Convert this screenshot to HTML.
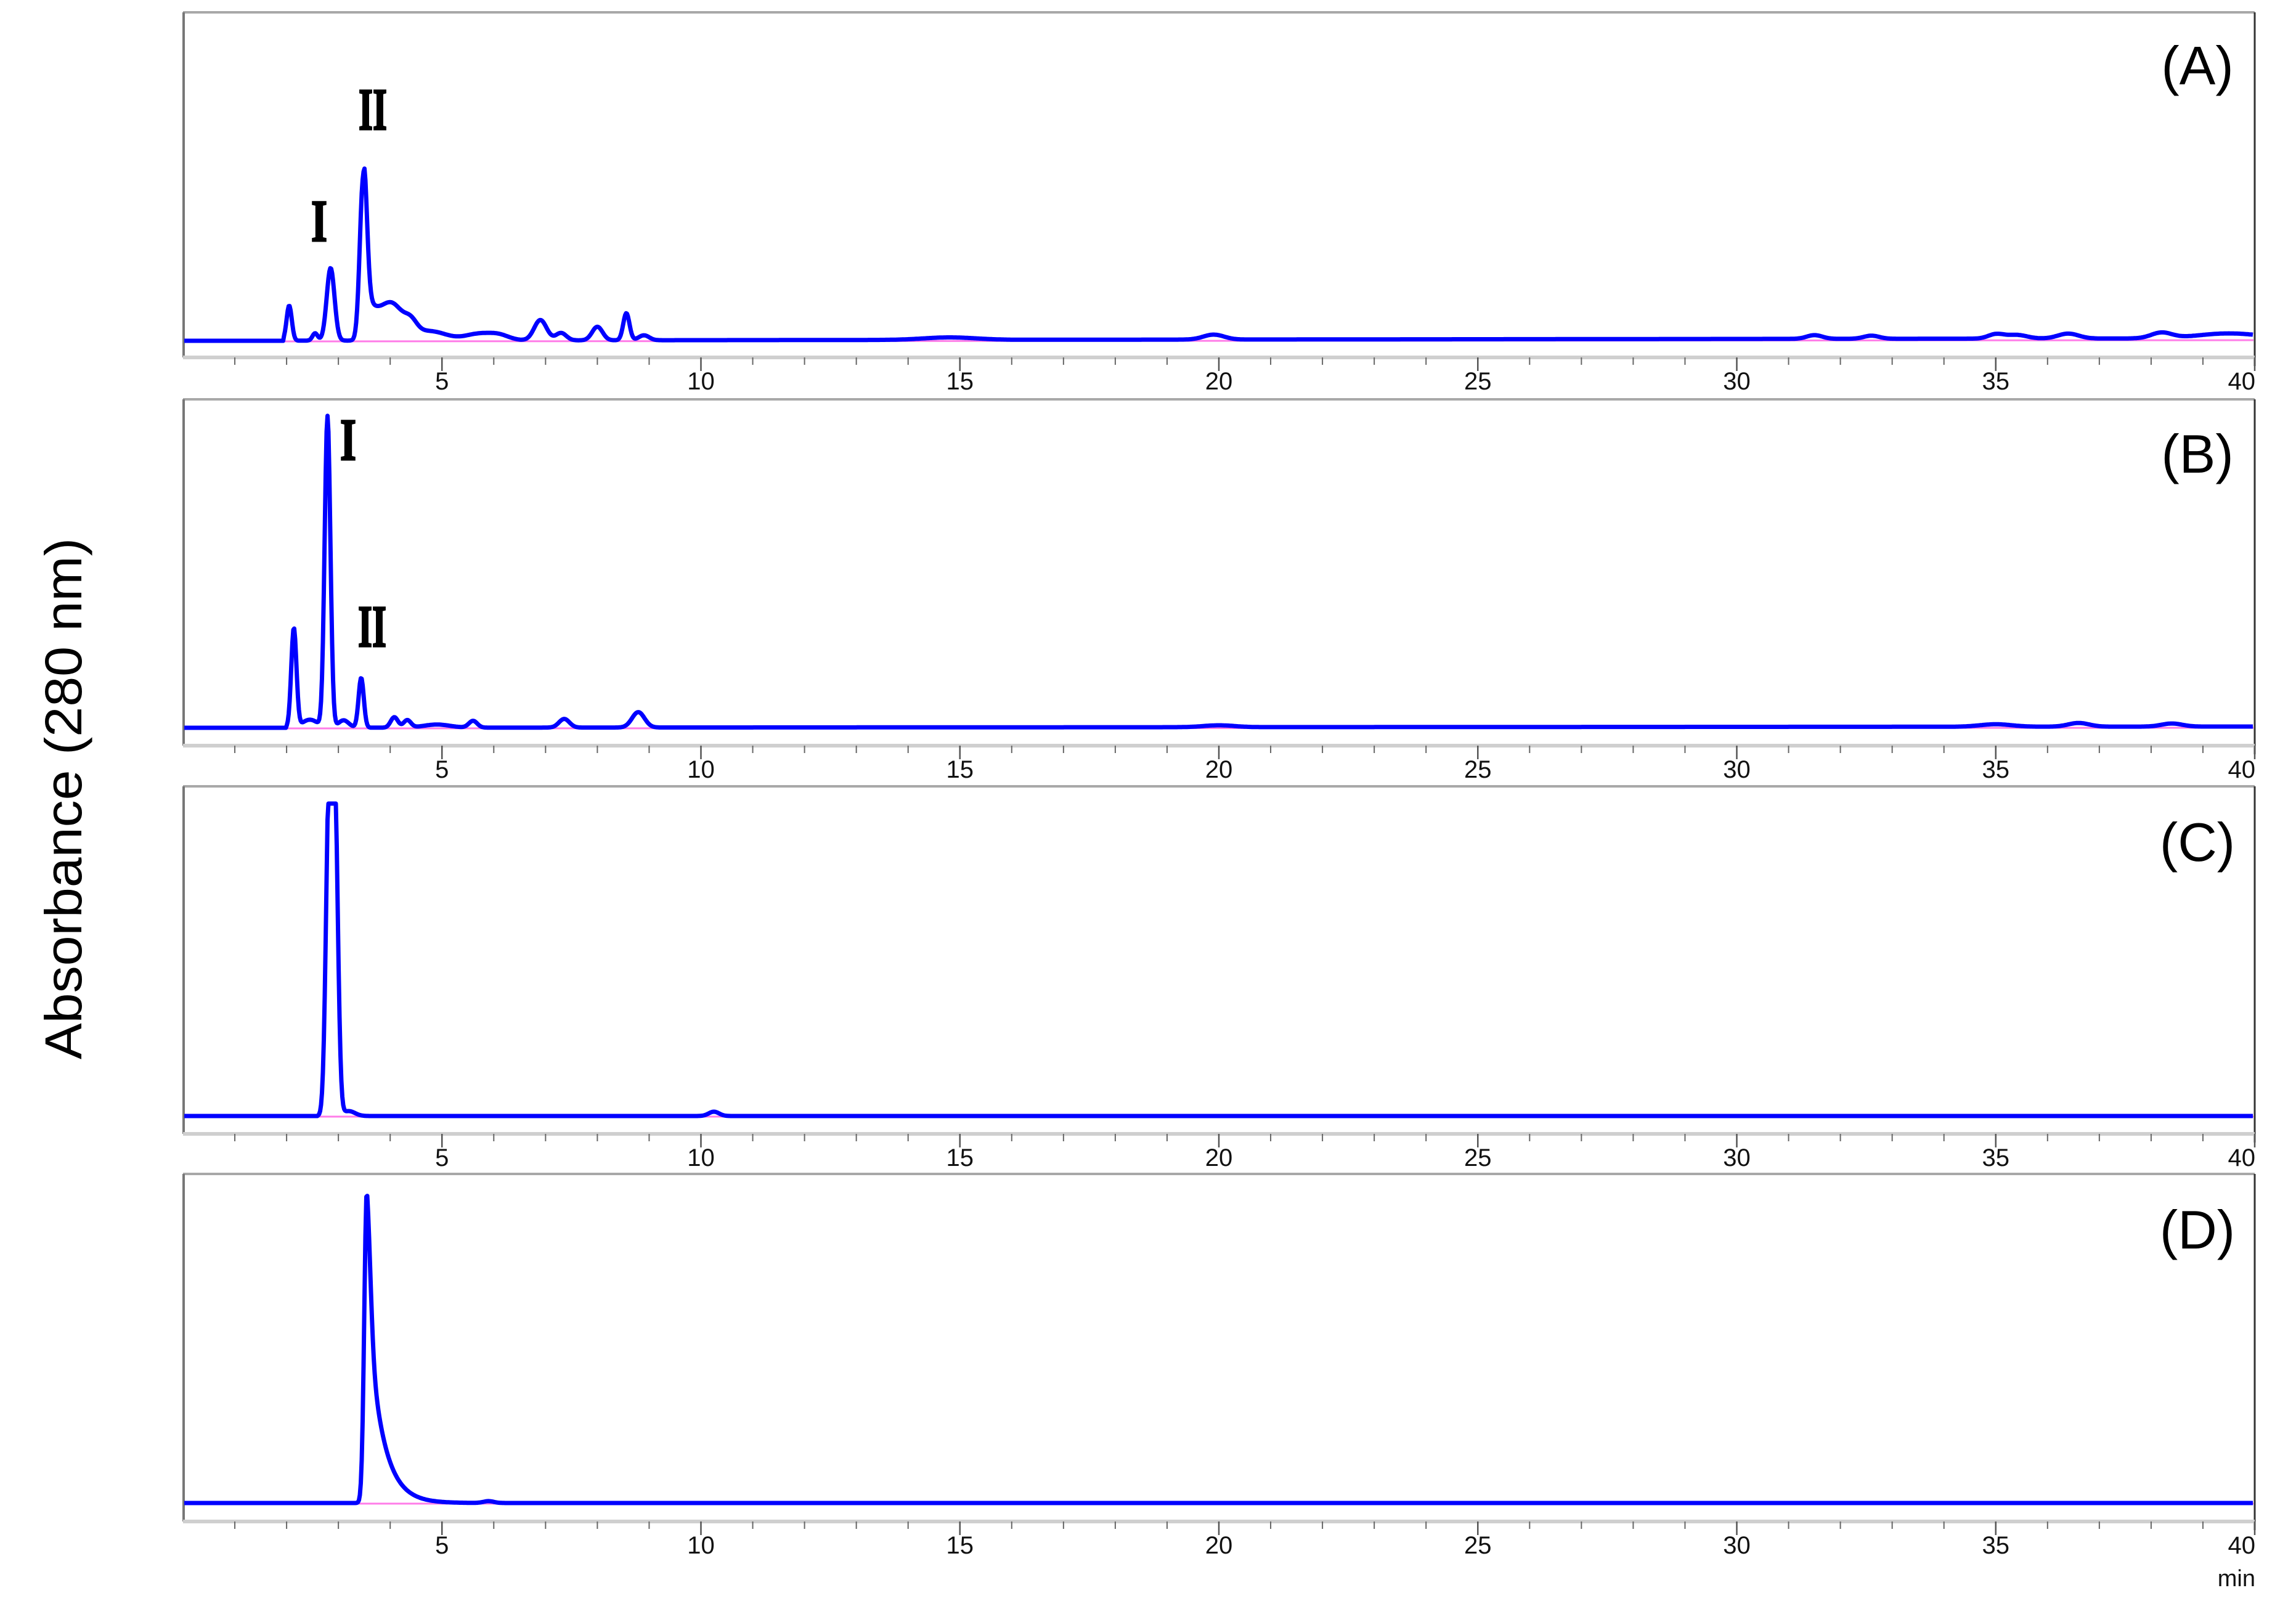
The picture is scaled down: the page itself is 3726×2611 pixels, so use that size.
<!DOCTYPE html>
<html><head><meta charset="utf-8"><style>
html,body{margin:0;padding:0;background:#fff}
svg{display:block}
</style></head><body>
<svg id="s" width="3726" height="2611" viewBox="0 0 3726 2611" xmlns="http://www.w3.org/2000/svg">
<rect width="3726" height="2611" fill="#fff"/>
<g id="g"></g>
<text x="0" y="0" transform="translate(132,1296) rotate(-90)" text-anchor="middle" font-family="Liberation Sans, sans-serif" font-size="84" fill="#000" textLength="846" lengthAdjust="spacingAndGlyphs">Absorbance (280 nm)</text>
<g font-family="Liberation Sans, sans-serif" font-size="88" fill="#000" text-anchor="middle">
<text x="3566" y="137">(A)</text>
<text x="3566" y="767">(B)</text>
<text x="3566" y="1397">(C)</text>
<text x="3566" y="2026">(D)</text>
</g>
<g font-family="Liberation Serif, serif" font-weight="bold" font-size="96" fill="#000" stroke="#000" stroke-width="3">
<text x="505" y="391" textLength="26" lengthAdjust="spacingAndGlyphs">I</text>
<text x="582" y="210" textLength="46" lengthAdjust="spacingAndGlyphs">II</text>
<text x="552" y="746" textLength="26" lengthAdjust="spacingAndGlyphs">I</text>
<text x="581" y="1049" textLength="46" lengthAdjust="spacingAndGlyphs">II</text>
</g>
<text x="3660" y="2574" font-family="Liberation Sans, sans-serif" font-size="38" fill="#111" text-anchor="end">min</text>
</svg>
<script>
var NS="http://www.w3.org/2000/svg",g=document.getElementById('g');
function X(t){return 297+84.05*t;}
var XR=3659;
function el(n,a,txt){var e=document.createElementNS(NS,n);for(var k in a)e.setAttribute(k,a[k]);if(txt!==undefined)e.textContent=txt;g.appendChild(e);return e;}
var panels=[
 {top:20,axis:580,base:553,peaks:[[2.05,57,0.05],[2.55,12,0.05],[2.85,118,0.075],[3.48,265,0.065],[4.05,40,0.2],[4.4,18,0.12],[4.8,12,0.3],[5.7,10,0.25],[6.1,8,0.2],[6.9,33,0.12],[7.3,12,0.1],[8.0,22,0.1],[8.56,44,0.06],[8.9,8,0.1],[14.8,4,0.5],[19.9,8,0.2],[31.5,6,0.15],[32.6,5,0.15],[35.0,7,0.15],[35.4,6,0.2],[36.4,8,0.2],[38.2,9,0.2],[39.5,8,0.6]],drift:4,start:1.95,tailAmp:[3.48,85,0.4]},
 {top:648,axis:1210,base:1181,peaks:[[2.14,161,0.05],[2.45,13,0.15],[2.79,505,0.055],[3.1,12,0.1],[3.44,81,0.05],[4.08,17,0.07],[4.33,12,0.07],[4.9,5,0.25],[5.6,11,0.08],[7.36,14,0.1],[8.79,25,0.12],[20,3,0.3],[35,4,0.3],[36.6,6,0.2],[38.4,5,0.2]],drift:2,start:2.0},
 {top:1276,axis:1840,base:1811,peaks:[[2.82,507,0.06],[2.93,507,0.06],[3.2,8,0.12],[10.25,7,0.1]],drift:0,start:2.6,flat:[2.87,507]},
 {top:1905,axis:2469,base:2439,peaks:[[5.9,3,0.1]],drift:0,start:3.2,tail:[3.55,508,0.05,0.28]}
];
panels.forEach(function(p,i){
 el('line',{x1:297,y1:p.top,x2:XR,y2:p.top,stroke:'#a8a8a8','stroke-width':4});
 el('line',{x1:298,y1:p.top,x2:298,y2:p.axis,stroke:'#777','stroke-width':4});
 el('line',{x1:XR,y1:p.top,x2:XR,y2:p.axis+14,stroke:'#333','stroke-width':3});
 el('line',{x1:297,y1:p.axis,x2:XR,y2:p.axis,stroke:'#cfcfcf','stroke-width':6});
 for(var t=1;t<=40;t++){
  var maj=t%5==0;
  el('line',{x1:X(t),y1:p.axis,x2:X(t),y2:p.axis+(maj?22:12),stroke:maj?'#555':'#666','stroke-width':maj?2.5:2});
  if(maj) el('text',{x:t==40?XR+1:X(t),y:p.axis+52,'font-family':'Liberation Sans, sans-serif','font-size':40,'text-anchor':t==40?'end':'middle',fill:'#111'},String(t));
 }
 el('line',{x1:X(p.start),y1:p.base+1,x2:XR-2,y2:p.base+1-p.drift*0.5,stroke:'#ff7de8','stroke-width':3});
 var d='';
 for(var x=299;x<=XR-2;x+=1.5){
  var t=(x-297)/84.05, y=0;
  if(t>p.start){
   p.peaks.forEach(function(k){var z=(t-k[0])/k[2];y+=k[1]*Math.exp(-0.5*z*z);});
   if(p.tailAmp){var a=p.tailAmp; if(t>a[0]) y+=a[1]*Math.exp(-(t-a[0])/a[2])*(1-Math.exp(-(t-a[0])/0.05));}
   if(p.tail){var a=p.tail; if(t<a[0]){var z=(t-a[0])/a[2];y+=a[1]*Math.exp(-0.5*z*z);} else {y+=a[1]*(0.35*Math.exp(-Math.pow((t-a[0])/0.07,2)/2)+0.65*Math.exp(-(t-a[0])/a[3]));}}
   if(p.flat&&y>p.flat[1])y=p.flat[1];
   y+=p.drift*(t/40);
  }
  if(i==2&&y>508)y=508;
  d+=(d?'L':'M')+x.toFixed(1)+','+(p.base-y).toFixed(1);
 }
 el('path',{d:d,fill:'none',stroke:'#0000ff','stroke-width':7,'stroke-linejoin':'round'});
});
</script>
</body></html>
